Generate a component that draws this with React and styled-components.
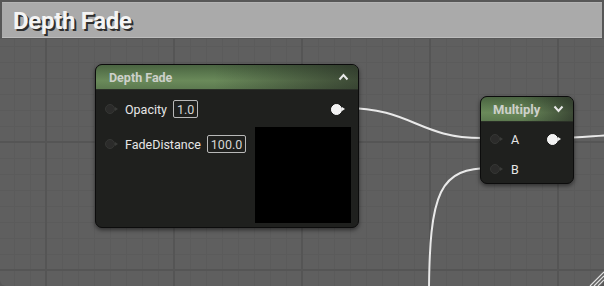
import React from "react";
import styled, { createGlobalStyle } from "styled-components";

const GlobalStyle = createGlobalStyle`
  html, body {
    margin: 0;
    padding: 0;
    background: #575757;
  }
  body {
    font-family: Roboto, "Open Sans", sans-serif;
  }
`;

const Frame = styled.div`
  width: 604px;
  height: 286px;
  box-sizing: border-box;
  padding: 2px 2px 0 2px;
  background: #575757;
  display: flex;
  flex-direction: column;
  overflow: hidden;
`;

const TitleBar = styled.div`
  height: 36px;
  flex: none;
  box-sizing: border-box;
  background: #aaaaaa;
  border-top: 1px solid #b4b4b4;
  border-bottom: 1px solid #bcbcbc;
  display: flex;
  align-items: center;
  padding: 1px 0 0 11px;
  color: #f4f4f4;
  font-weight: 700;
  font-size: 24px;
  letter-spacing: -0.3px;
  text-shadow: 2px 2px 0 #2e2e2e;
`;

const Canvas = styled.div`
  position: relative;
  flex: 1;
  margin: 1px -2px 0 -2px;
  border-radius: 0 0 6px 6px;
  overflow: hidden;
  background-color: #5f5f5f;
  background-image:
    linear-gradient(to right, #555555 2px, transparent 2px),
    linear-gradient(to bottom, #555555 2px, transparent 2px),
    linear-gradient(to right, #5b5b5b 1px, transparent 1px),
    linear-gradient(to bottom, #5b5b5b 1px, transparent 1px);
  background-size: 128px 128px, 128px 128px, 16px 16px, 16px 16px;
  background-position: 45px 0, 0 102px, 14px 0, 0 7px;
`;

const Wires = styled.svg`
  position: absolute;
  inset: 0;
  width: 100%;
  height: 100%;
  pointer-events: none;
`;

const Grip = styled.svg`
  position: absolute;
  right: 0;
  bottom: 0;
`;

const Node = styled.div`
  position: absolute;
  box-sizing: border-box;
  border-radius: 7px;
  background: #1f201e;
  border: 1px solid #0c0c0c;
  box-shadow: 0 2px 4px rgba(0, 0, 0, 0.5);
  overflow: hidden;
  display: flex;
  flex-direction: column;
`;

const Header = styled.div`
  height: 24px;
  flex: none;
  display: flex;
  align-items: center;
  justify-content: space-between;
  padding: 0 9px 0 ${(p) => p.$pad || 12}px;
  background:
    linear-gradient(to right, rgba(31, 32, 30, 0) 45%, rgba(31, 32, 30, 0.6) 100%),
    linear-gradient(to bottom, #4a6441 0%, #6a8a5a 65%, #5d7a50 100%);
  border-bottom: 1px solid #2a2f27;
  color: #cdd0ca;
  font-weight: 700;
  font-size: ${(p) => p.$size || 12.5}px;
`;

const Body = styled.div`
  flex: 1;
  display: flex;
  justify-content: space-between;
`;

const Inputs = styled.div`
  display: flex;
  flex-direction: column;
  gap: ${(p) => p.$gap}px;
  padding-top: ${(p) => p.$top}px;
  padding-left: 9px;
`;

const PinRow = styled.div`
  height: 22px;
  display: flex;
  align-items: center;
  color: #e6e6e6;
  font-size: 12.5px;
`;

const PinDot = styled.span`
  width: ${(p) => (p.$on ? 11 : 10)}px;
  height: ${(p) => (p.$on ? 11 : 10)}px;
  border-radius: 50%;
  box-sizing: border-box;
  background: ${(p) => (p.$on ? "#f2f2f2" : "#2b2b2a")};
  border: 1px solid ${(p) => (p.$on ? "#ffffff" : "#353634")};
  position: relative;
  flex: none;
  &::after {
    content: "";
    position: absolute;
    right: -4px;
    top: ${(p) => (p.$on ? 2.5 : 2)}px;
    border-left: 3px solid ${(p) => (p.$on ? "#f2f2f2" : "#3a3b39")};
    border-top: 2.5px solid transparent;
    border-bottom: 2.5px solid transparent;
  }
`;

const Label = styled.span`
  margin-left: ${(p) => p.$gap || 10}px;
`;

const ValueBox = styled.span`
  margin-left: 6px;
  height: 18px;
  box-sizing: border-box;
  padding: 0 3px;
  border: 1px solid #b8b8b8;
  border-radius: 2px;
  display: inline-flex;
  align-items: center;
  color: #d6d6d6;
  font-size: 12.5px;
`;

const Outputs = styled.div`
  display: flex;
  flex-direction: column;
  align-items: flex-end;
  padding: ${(p) => p.$top}px ${(p) => p.$right}px 0 0;
`;

const OutRow = styled.div`
  height: 22px;
  display: flex;
  align-items: center;
  padding-right: ${(p) => p.$inset || 0}px;
`;

const Preview = styled.div`
  width: 96px;
  height: 96px;
  margin-top: 7px;
  background: #000;
`;

const Chevron = ({ up }) => (
  <svg width="11" height="8" viewBox="0 0 11 8">
    <polyline
      points={up ? "1.5,6.5 5.5,2 9.5,6.5" : "1.5,1.5 5.5,6 9.5,1.5"}
      fill="none"
      stroke="#e8e8e8"
      strokeWidth="2"
    />
  </svg>
);

export default function App() {
  return (
    <>
      <GlobalStyle />
      <Frame>
        <TitleBar>Depth Fade</TitleBar>
        <Canvas>
          <Wires>
            <g fill="none" stroke="#e9e9e9" strokeWidth="2">
              <path d="M 345 69 C 412 69, 418 99, 482 99" />
              <path d="M 556 99 C 578 99, 592 97, 610 96" />
              <path d="M 492 129 C 440 129, 429 150, 429 260" />
            </g>
          </Wires>

          <Node style={{ left: 95, top: 25, width: 264, height: 164 }}>
            <Header $pad={13}>
              <span>Depth Fade</span>
              <Chevron up />
            </Header>
            <Body>
              <Inputs $top={8} $gap={13}>
                <PinRow>
                  <PinDot />
                  <Label>Opacity</Label>
                  <ValueBox>1.0</ValueBox>
                </PinRow>
                <PinRow>
                  <PinDot />
                  <Label>FadeDistance</Label>
                  <ValueBox>100.0</ValueBox>
                </PinRow>
              </Inputs>
              <Outputs $top={8} $right={7}>
                <OutRow $inset={9}>
                  <PinDot $on />
                </OutRow>
                <Preview />
              </Outputs>
            </Body>
          </Node>

          <Node style={{ left: 480, top: 57, width: 94, height: 88 }}>
            <Header $pad={12} $size={13}>
              <span>Multiply</span>
              <Chevron />
            </Header>
            <Body>
              <Inputs $top={6} $gap={8}>
                <PinRow>
                  <PinDot />
                  <Label $gap={11}>A</Label>
                </PinRow>
                <PinRow>
                  <PinDot />
                  <Label $gap={11}>B</Label>
                </PinRow>
              </Inputs>
              <Outputs $top={6} $right={15}>
                <OutRow>
                  <PinDot $on />
                </OutRow>
              </Outputs>
            </Body>
          </Node>

          <Grip width="16" height="16" viewBox="0 0 16 16">
            <g stroke="#e0e0e0" strokeWidth="1.2">
              <line x1="2" y1="16" x2="16" y2="2" />
              <line x1="6" y1="16" x2="16" y2="6" />
              <line x1="10" y1="16" x2="16" y2="10" />
            </g>
          </Grip>
        </Canvas>
      </Frame>
    </>
  );
}
